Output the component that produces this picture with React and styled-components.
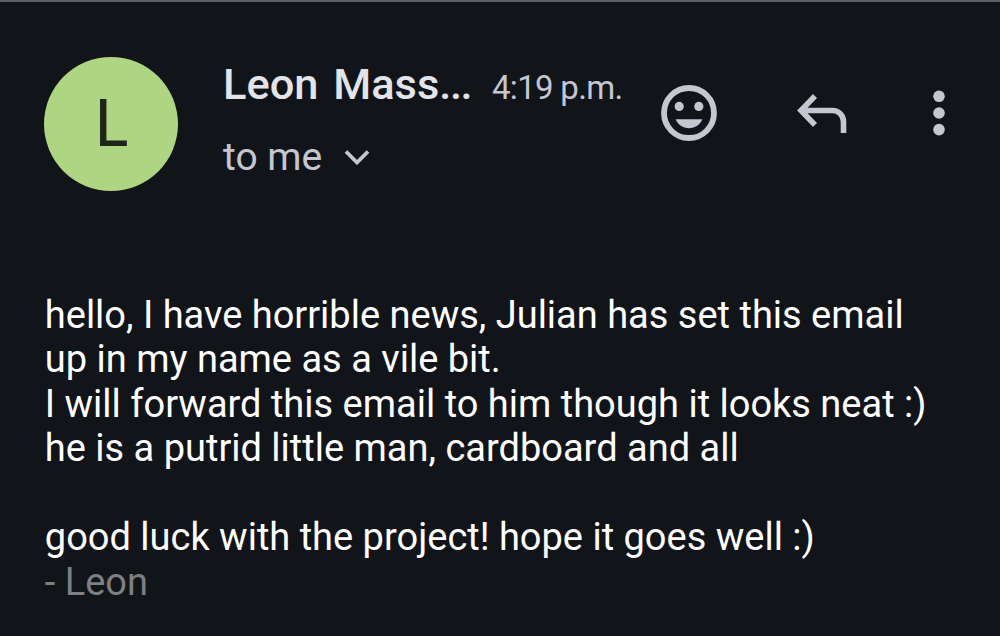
import React from 'react';
import styled, { createGlobalStyle } from 'styled-components';

const GlobalStyle = createGlobalStyle`
  body {
    margin: 0;
    background: #111419;
  }
`;

const Page = styled.main`
  box-sizing: border-box;
  width: 1000px;
  height: 636px;
  overflow: hidden;
  border-top: 2px solid #5c5f64;
  padding: 55px 44px 0;
  background: #111419;
  font-family: Roboto, sans-serif;
`;

const Header = styled.header`
  display: flex;
  height: 134px;
`;

const Avatar = styled.div`
  box-sizing: border-box;
  display: flex;
  align-items: center;
  justify-content: center;
  width: 134px;
  height: 134px;
  margin-right: 45px;
  padding-bottom: 6px;
  border-radius: 50%;
  background: #aed581;
  color: #20251b;
  font-family: Lato, sans-serif;
  font-size: 66px;
  line-height: 1;
`;

const Sender = styled.div`
  width: 400px;
  white-space: nowrap;
`;

const SenderRow = styled.div`
  display: flex;
  align-items: baseline;
  height: 56px;
  line-height: 56px;
`;

const Name = styled.span`
  width: 269px;
  color: #e2e4ea;
  font-size: 43.4px;
  font-weight: 500;
  word-spacing: 4px;
`;

const Ellipsis = styled.span`
  letter-spacing: -1.4px;
`;

const Time = styled.span`
  color: #c4c6d0;
  font-size: 33px;
  letter-spacing: -0.7px;
`;

const Recipient = styled.div`
  display: flex;
  align-items: center;
  gap: 22px;
  height: 56px;
  margin-top: 16px;
  color: #c4c6d0;
  font-size: 39px;
`;

const Actions = styled.div`
  display: flex;
  height: 112px;
  align-items: center;
  margin-left: 38px;
`;

const Icon = styled.svg`
  flex: none;
  display: block;
  margin-left: ${({ $space }) => $space || 0}px;
`;

const Message = styled.div`
  margin: 101.7px 0 0 0.8px;
  color: #fff;
  font-size: 38px;
  line-height: 44.5px;
  white-space: nowrap;
`;

const Line = styled.div`
  width: max-content;
  min-height: 44.5px;
  color: ${({ $muted }) => ($muted ? '#7d7f82' : 'inherit')};
`;

const App = () => {
  return (
    <Page>
      <GlobalStyle />
      <Header>
        <Avatar>L</Avatar>
        <Sender>
          <SenderRow>
            <Name>Leon Mass<Ellipsis>...</Ellipsis></Name>
            <Time>4:19 p.m.</Time>
          </SenderRow>
          <Recipient>
            to me
            <Icon width="26" height="16" viewBox="0 0 26 16" fill="none" stroke="#c4c6d0" strokeWidth="3.8">
              <path d="M2 2.5l11 11L24 2.5" />
            </Icon>
          </Recipient>
        </Sender>
        <Actions>
          <Icon width="56" height="56" viewBox="0 0 56 56" fill="#c4c6d0">
            <circle cx="28" cy="28" r="25" fill="none" stroke="#c4c6d0" strokeWidth="5.8" />
            <circle cx="18.2" cy="21.4" r="4.6" />
            <circle cx="37.8" cy="21.4" r="4.6" />
            <path d="M14.6 34.2h26.8C39 39.6 34.2 43.2 28 43.2S17 39.6 14.6 34.2z" />
          </Icon>
          <Icon $space={80} width="50" height="39" viewBox="0 0 50 39" fill="none" stroke="#c4c6d0" strokeWidth="5.6">
            <path d="M18 2L4 16.5L18 31M4 16.5h31.5a11 11 0 0 1 11 11V39" />
          </Icon>
          <Icon $space={86} width="12" height="46" viewBox="0 0 12 46" fill="#c4c6d0">
            <circle cx="6" cy="6.3" r="5.8" />
            <circle cx="6" cy="23" r="5.8" />
            <circle cx="6" cy="39.6" r="5.8" />
          </Icon>
        </Actions>
      </Header>
      <Message>
        <Line>hello, I have horrible news, Julian has set this email</Line>
        <Line>up in my name as a vile bit.</Line>
        <Line>I will forward this email to him though it looks neat :)</Line>
        <Line>he is a putrid little man, cardboard and all</Line>
        <Line />
        <Line>good luck with the project! hope it goes well :)</Line>
        <Line $muted>- Leon</Line>
      </Message>
    </Page>
  );
};

export default App;
